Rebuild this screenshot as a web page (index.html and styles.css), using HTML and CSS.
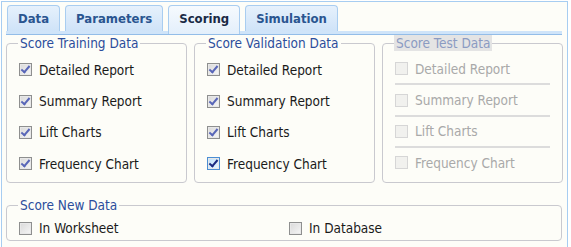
FILE: index.html
```html
<!DOCTYPE html>
<html lang="en">
<head>
    <meta charset="UTF-8">
    <title>Scoring</title>
    <link rel="stylesheet" href="styles.css">
</head>
<body>
    <div class="panel">
        <div class="tabs">
            <div class="tab">Data</div>
            <div class="tab">Parameters</div>
            <div class="tab active">Scoring</div>
            <div class="tab">Simulation</div>
        </div>

        <div class="groups">
            <fieldset class="group">
                <legend>Score Training Data</legend>
                <label class="item"><span class="box checked"></span>Detailed Report</label>
                <label class="item"><span class="box checked"></span>Summary Report</label>
                <label class="item"><span class="box checked"></span>Lift Charts</label>
                <label class="item"><span class="box checked"></span>Frequency Chart</label>
            </fieldset>

            <fieldset class="group">
                <legend>Score Validation Data</legend>
                <label class="item"><span class="box checked"></span>Detailed Report</label>
                <label class="item"><span class="box checked"></span>Summary Report</label>
                <label class="item"><span class="box checked"></span>Lift Charts</label>
                <label class="item"><span class="box checked hot"></span>Frequency Chart</label>
            </fieldset>

            <fieldset class="group disabled">
                <legend>Score Test Data</legend>
                <label class="item"><span class="box"></span>Detailed Report</label>
                <label class="item"><span class="box"></span>Summary Report</label>
                <label class="item"><span class="box"></span>Lift Charts</label>
                <label class="item"><span class="box"></span>Frequency Chart</label>
            </fieldset>
        </div>

        <fieldset class="group new-data">
            <legend>Score New Data</legend>
            <label class="item"><span class="box"></span>In Worksheet</label>
            <label class="item"><span class="box"></span>In Database</label>
        </fieldset>
    </div>
</body>
</html>
```

FILE: styles.css
```css
body {
    margin: 0;
    background-color: #ffffff;
    font-family: "DejaVu Sans Condensed", "DejaVu Sans", sans-serif;
    font-size: 13.5px;
    color: #1a1a1a;
}
.panel {
    width: 567px;
    height: 246px;
    border: 1px solid #a7cdf1;
    border-bottom: none;
    background-color: #fdfdf8;
    margin: 1px 0 0 1px;
    box-sizing: border-box;
    padding: 3px 4px 0 4px;
}
.tabs {
    display: flex;
    gap: 5px;
    padding-left: 1px;
    height: 26px;
    border-bottom: 3px solid #cfe4f9;
    box-shadow: 0 1px 0 #93bde8;
    margin-right: 1px;
}
.tab {
    height: 25px;
    line-height: 25px;
    padding: 0 10px;
    border: 1px solid #a9cdf0;
    border-bottom: none;
    border-radius: 4px 4px 0 0;
    background: linear-gradient(#e6f1fc, #cfe3f8);
    color: #2a5590;
    font-weight: bold;
    font-size: 13px;
}
.tab.active {
    height: 28px;
    background: linear-gradient(#f6fafe, #e3effb);
    color: #1a2a45;
    position: relative;
    z-index: 1;
}
.groups {
    display: flex;
    gap: 7px;
    margin-top: 1px;
}
.group {
    margin: 0;
    padding: 3px 0 0 12px;
    border: 1px solid #c9c9cf;
    border-radius: 4px;
}
.groups .group {
    width: 182px;
    height: 148px;
    box-sizing: border-box;
}
.group legend {
    color: #2c4d9c;
    padding: 0 2px;
    margin-left: -1px;
    line-height: 16px;
}
.item {
    display: flex;
    align-items: center;
    height: 31.4px;
    gap: 7px;
}
.box {
    width: 11px;
    height: 11px;
    border: 1px solid #8e8f8f;
    background: linear-gradient(135deg, #d9d9d9, #f6f6f6);
    box-shadow: inset 0 0 0 1px #e8e8e8;
    display: flex;
    align-items: center;
    justify-content: center;
}
.box.checked::after {
    content: "";
    width: 3px;
    height: 7px;
    border: solid #5866b8;
    border-width: 0 2px 2px 0;
    transform: rotate(40deg);
    margin-top: -2px;
}
.box.hot {
    border-color: #4b8ed3;
    background: linear-gradient(135deg, #bfe2fb, #e8f5fe);
}
.box.hot::after {
    border-color: #1b2a80;
}
.disabled legend {
    background-color: #e4e4e4;
    color: #8b9bc2;
}
.disabled .item {
    color: #a9a9a9;
    border-bottom: 2px solid #dcdcdc;
    margin-right: 12px;
    height: 29.4px;
}
.disabled .item:last-child {
    border-bottom: none;
}
.disabled .box {
    border-color: #d6d6d6;
    background: #f1f1ee;
    box-shadow: none;
}
.new-data {
    margin-top: 14px;
    padding-top: 4px;
    height: 44px;
    box-sizing: border-box;
    display: flex;
    margin-right: 1px;
}
.new-data .item {
    width: 270px;
    height: 22px;
}
```
